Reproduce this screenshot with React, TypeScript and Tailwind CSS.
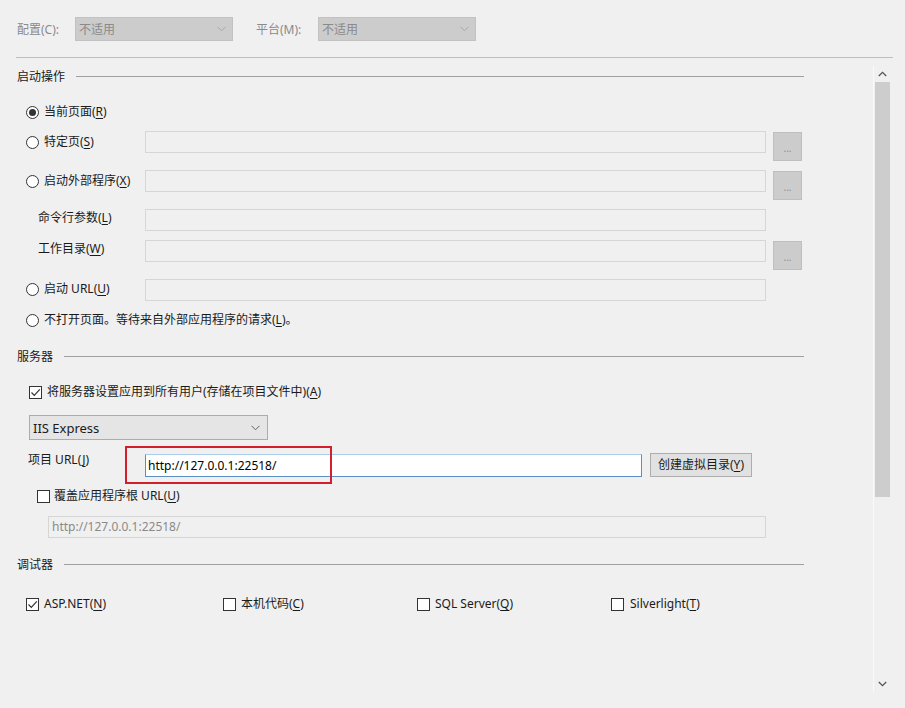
import React from 'react';

const font = { fontFamily: '"Segoe UI", "Noto Sans", "Noto Sans CJK SC", sans-serif' };

function Key({ k }: { k: string }) {
  return <span className="underline underline-offset-2">{k}</span>;
}

function Radio({ checked }: { checked?: boolean }) {
  return (
    <span className="flex h-[13px] w-[13px] shrink-0 items-center justify-center rounded-full border border-[#333333] bg-white">
      {checked && <span className="h-[7px] w-[7px] rounded-full bg-[#333333]" />}
    </span>
  );
}

function Check({ checked }: { checked?: boolean }) {
  return (
    <span className="flex h-[13px] w-[13px] shrink-0 items-center justify-center border border-[#333333] bg-white">
      {checked && (
        <svg width="11" height="11" viewBox="0 0 11 11">
          <path d="M1.5 5.5 L4.3 8.3 L9.8 2.3" fill="none" stroke="#333" strokeWidth="1.2" />
        </svg>
      )}
    </span>
  );
}

function Chevron({ color }: { color: string }) {
  return (
    <svg width="9" height="6" viewBox="0 0 9 6">
      <path d="M0.5 0.8 L4.5 4.8 L8.5 0.8" fill="none" stroke={color} strokeWidth="1" />
    </svg>
  );
}

function Field() {
  return <div className="h-[22px] w-[621px] border border-[#d6d6d6] bg-[#f0f0f0]" />;
}

function Browse() {
  return (
    <div className="ml-[7px] mt-px flex h-[29px] w-[29px] items-end justify-center border border-[#bfbfbf] bg-[#cccccc] pb-[7px] text-[10px] leading-none text-[#8c8c8c]">
      ...
    </div>
  );
}

function SectionHeader({ title }: { title: string }) {
  return (
    <div className="flex h-[20px] w-[787px] items-start gap-[11px]">
      <span className="mt-px whitespace-nowrap leading-[20px]">{title}</span>
      <div className="mt-[10px] h-px flex-1 bg-[#a0a0a0]" />
    </div>
  );
}

export default function App() {
  return (
    <div className="h-[708px] w-[905px] overflow-hidden bg-[#f0f0f0] text-[12px] leading-[16px] text-[#1a1a1a]" style={font}>
      {/* Configuration / platform */}
      <div className="mt-[17px] flex h-[24px] items-center pl-[17px] text-[#8a8a8a]">
        <span className="mt-px w-[58px]">配置(C):</span>
        <div className="flex h-[24px] w-[158px] items-center justify-between border border-[#c2c2c2] bg-[#cccccc] pl-[3px] pr-[6px]">
          <span className="mt-px">不适用</span>
          <Chevron color="#a8a8a8" />
        </div>
        <span className="ml-[23px] mt-px w-[62px]">平台(M):</span>
        <div className="flex h-[24px] w-[158px] items-center justify-between border border-[#c2c2c2] bg-[#cccccc] pl-[3px] pr-[6px]">
          <span className="mt-px">不适用</span>
          <Chevron color="#a8a8a8" />
        </div>
      </div>
      <div className="ml-[16px] mt-[16px] h-px w-[877px] bg-[#bdbdbd]" />

      <div className="mt-[8px] flex">
        {/* Page content */}
        <div className="relative flex w-[856px] flex-col pl-[17px]">
          <SectionHeader title="启动操作" />

          <div className="ml-[9px] mt-[16px] flex h-[20px] items-center gap-[5px]">
            <Radio checked />
            <span>
              当前页面(<Key k="R" />)
            </span>
          </div>

          <div className="mt-[9px] flex h-[22px] items-start">
            <div className="flex h-[22px] w-[128px] items-center gap-[5px] pl-[9px]">
              <Radio />
              <span>
                特定页(<Key k="S" />)
              </span>
            </div>
            <Field />
            <Browse />
          </div>

          <div className="mt-[17px] flex h-[22px] items-start">
            <div className="flex h-[22px] w-[128px] items-center gap-[5px] pl-[9px]">
              <Radio />
              <span className="whitespace-nowrap">
                启动外部程序(<Key k="X" />)
              </span>
            </div>
            <Field />
            <Browse />
          </div>

          <div className="mt-[17px] flex h-[22px] items-start">
            <div className="flex h-[18px] w-[128px] items-center pl-[21px]">
              <span>
                命令行参数(<Key k="L" />)
              </span>
            </div>
            <Field />
          </div>

          <div className="mt-[9px] flex h-[22px] items-start">
            <div className="flex h-[18px] w-[128px] items-center pl-[21px]">
              <span>
                工作目录(<Key k="W" />)
              </span>
            </div>
            <Field />
            <Browse />
          </div>

          <div className="mt-[17px] flex h-[22px] items-start">
            <div className="flex h-[20px] w-[128px] items-center gap-[5px] pl-[9px]">
              <Radio />
              <span>
                启动 URL(<Key k="U" />)
              </span>
            </div>
            <Field />
          </div>

          <div className="ml-[9px] mt-[9px] flex h-[20px] items-center gap-[5px]">
            <Radio />
            <span>
              不打开页面。等待来自外部应用程序的请求(<Key k="L" />)。
            </span>
          </div>

          <div className="mt-[16px]">
            <SectionHeader title="服务器" />
          </div>

          <div className="ml-[12px] mt-[16px] flex h-[20px] items-center gap-[5px]">
            <Check checked />
            <span>
              将服务器设置应用到所有用户(存储在项目文件中)(<Key k="A" />)
            </span>
          </div>

          <div className="ml-[12px] mt-[13px] flex h-[25px] w-[239px] items-center justify-between border border-[#acacac] bg-[#e5e5e5] pl-[3px] pr-[7px] text-[13px]">
            <span>IIS Express</span>
            <Chevron color="#606060" />
          </div>

          <div className="relative mt-[14px] flex h-[23px] items-start">
            <div className="-mt-[2px] w-[128px] pl-[11px]">
              项目 URL(<Key k="J" />)
            </div>
            <div className="flex h-[23px] w-[497px] items-center border border-[#5b8fc4] border-t-[#a9cdea] bg-white pl-[2px] text-black">
              http://127.0.0.1:22518/
            </div>
            <div className="ml-[8px] -mt-px flex h-[24px] w-[102px] items-center justify-center border border-[#adadad] bg-[#e1e1e1]">
              创建虚拟目录(<Key k="Y" />)
            </div>
            <div className="pointer-events-none absolute left-[108px] top-[-8px] h-[38px] w-[207px] border-2 border-[#d21f2b]" />
          </div>

          <div className="ml-[20px] mt-[9px] flex h-[20px] items-center gap-[4px]">
            <Check />
            <span>
              覆盖应用程序根 URL(<Key k="U" />)
            </span>
          </div>

          <div className="ml-[31px] mt-[10px] flex h-[22px] w-[718px] items-center border border-[#d6d6d6] pl-[3px] text-[#8a8a8a]">
            http://127.0.0.1:22518/
          </div>

          <div className="mt-[16px]">
            <SectionHeader title="调试器" />
          </div>

          <div className="ml-[9px] mt-[20px] flex h-[20px] items-center">
            <div className="flex w-[197px] items-center gap-[5px]">
              <Check checked />
              <span>
                ASP.NET(<Key k="N" />)
              </span>
            </div>
            <div className="flex w-[194px] items-center gap-[5px]">
              <Check />
              <span>
                本机代码(<Key k="C" />)
              </span>
            </div>
            <div className="flex w-[194px] items-center gap-[5px]">
              <Check />
              <span>
                SQL Server(<Key k="Q" />)
              </span>
            </div>
            <div className="flex items-center gap-[6px]">
              <Check />
              <span>
                Silverlight(<Key k="T" />)
              </span>
            </div>
          </div>
        </div>

        {/* Scrollbar */}
        <div className="ml-[17px] flex h-[626px] w-[17px] flex-col items-center border-l border-[#fafafa] bg-[#f0f0f0]">
          <div className="flex h-[16px] w-full items-center justify-center">
            <svg width="9" height="6" viewBox="0 0 9 6">
              <path d="M0.8 5 L4.5 1.3 L8.2 5" fill="none" stroke="#555" strokeWidth="1.3" />
            </svg>
          </div>
          <div className="h-[415px] w-[15px] bg-[#cdcdcd]" />
          <div className="flex-1" />
          <div className="flex h-[16px] w-full items-center justify-center">
            <svg width="9" height="6" viewBox="0 0 9 6">
              <path d="M0.8 1 L4.5 4.7 L8.2 1" fill="none" stroke="#555" strokeWidth="1.3" />
            </svg>
          </div>
        </div>
      </div>
    </div>
  );
}
